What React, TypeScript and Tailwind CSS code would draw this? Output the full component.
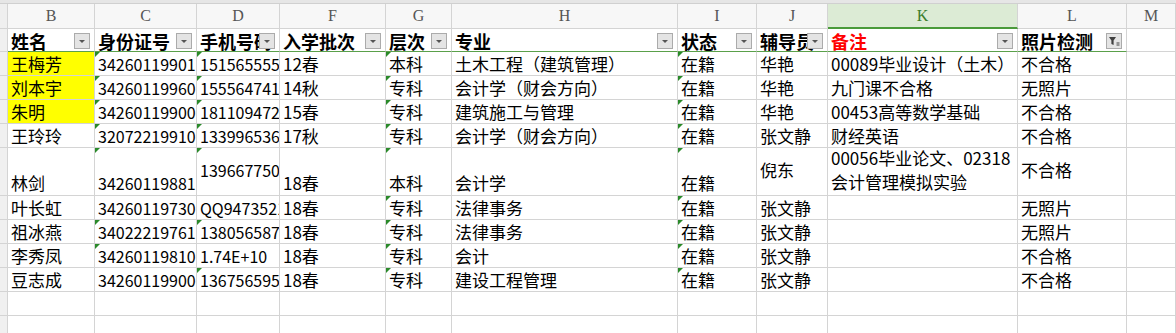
import React from 'react'

const COLS = ['B', 'C', 'D', 'F', 'G', 'H', 'I', 'J', 'K', 'L', 'M']

const HEADERS = ['姓名', '身份证号', '手机号码', '入学批次', '层次', '专业', '状态', '辅导员', '备注', '照片检测']

type Row = { cells: string[]; yellow?: boolean; tall?: boolean; marks: number[] }

// marks: column indexes (0 = B) that carry the green "number stored as text" corner
const ROWS: Row[] = [
  { cells: ['王梅芳', '34260119901', '151565555', '12春', '本科', '土木工程（建筑管理）', '在籍', '华艳', '00089毕业设计（土木）', '不合格'], yellow: true, marks: [1, 2, 4, 6] },
  { cells: ['刘本宇', '34260119960', '155564741', '14秋', '专科', '会计学（财会方向）', '在籍', '华艳', '九门课不合格', '无照片'], yellow: true, marks: [1, 2, 4, 6] },
  { cells: ['朱明', '34260119900', '181109472', '15春', '专科', '建筑施工与管理', '在籍', '华艳', '00453高等数学基础', '不合格'], yellow: true, marks: [1, 2, 4, 6] },
  { cells: ['王玲玲', '32072219910', '133996536', '17秋', '专科', '会计学（财会方向）', '在籍', '张文静', '财经英语', '不合格'], marks: [1, 2, 4, 6] },
  { cells: ['林剑', '34260119881', '139667750', '18春', '本科', '会计学', '在籍', '倪东', '', '不合格'], tall: true, marks: [1, 2, 4, 6] },
  { cells: ['叶长虹', '34260119730', 'QQ9473521', '18春', '专科', '法律事务', '在籍', '张文静', '', '无照片'], marks: [4, 6] },
  { cells: ['祖冰燕', '34022219761', '138056587', '18春', '专科', '法律事务', '在籍', '张文静', '', '无照片'], marks: [1, 2, 4, 6] },
  { cells: ['李秀凤', '34260119810', '1.74E+10', '18春', '专科', '会计', '在籍', '张文静', '', '不合格'], marks: [1, 4, 6] },
  { cells: ['豆志成', '34260119900', '136756595', '18春', '专科', '建设工程管理', '在籍', '张文静', '', '不合格'], marks: [2, 4, 6] },
]

const grid = 'border-r border-b border-[#d4d4d4]'

function Corner() {
  return (
    <span className="absolute left-0 top-0 h-0 w-0 border-t-[5px] border-r-[5px] border-t-[#2a8a2a] border-r-transparent" />
  )
}

function FilterButton({ active }: { active?: boolean }) {
  return (
    <span className="absolute right-[4px] bottom-[2px] flex h-[16px] w-[16px] items-center justify-center border border-[#ababab] bg-[#e4e4e4]">
      {active ? (
        <svg width="12" height="12" viewBox="0 0 12 12">
          <path d="M1 2h7L5.6 5.4V10L3.4 9V5.4z" fill="#404040" />
          <rect x="8.5" y="7.5" width="3" height="1" fill="#404040" />
          <rect x="8.5" y="9.5" width="3" height="1" fill="#404040" />
        </svg>
      ) : (
        <svg width="10" height="10" viewBox="0 0 10 10">
          <polygon points="2,4 8,4 5,7" fill="#555" />
        </svg>
      )}
    </span>
  )
}

function RowHead() {
  return <div className={`bg-[#f0f0f0] ${grid}`} />
}

export default function App() {
  return (
    <div
      className="h-[333px] w-[1176px] overflow-hidden bg-white text-black"
      style={{ fontFamily: '"Noto Sans CJK SC", "Liberation Sans", sans-serif' }}
    >
      {/* top strip */}
      <div className="h-[4px] border-b border-[#d0d0d0] bg-[#e6e6e6]" />

      <div className="grid grid-cols-[8px_87px_102px_83px_106px_66px_226px_79px_71px_190px_109px_1fr] grid-rows-[25px_23px_24px_24px_24px_24px_48px_24px_24px_24px_24px_24px_24px_24px]">
        {/* column letters */}
        <div className={`bg-[#efefef] ${grid}`} />
        {COLS.map((c) =>
          c === 'K' ? (
            <div
              key={c}
              className="flex items-center justify-center border-r border-b-2 border-r-[#d4d4d4] border-b-[#4a9a3a] bg-[#dcebd5] font-['Liberation_Serif'] text-[16px] text-[#3b7d2c]"
            >
              {c}
            </div>
          ) : (
            <div
              key={c}
              className={`flex items-center justify-center bg-[#f7f7f7] font-['Liberation_Serif'] text-[16px] text-[#555] ${grid}`}
            >
              {c}
            </div>
          ),
        )}

        {/* header row */}
        <div className={`bg-[#f0f0f0] ${grid}`} />
        {HEADERS.map((h, i) => (
          <div
            key={h}
            className={`relative flex items-center overflow-hidden whitespace-nowrap border-r border-b border-r-[#d4d4d4] border-b-[#5aa04a] pt-[2px] pl-[3px] text-[18px] leading-[20px] font-bold ${
              h === '备注' ? 'text-[#ff0000]' : ''
            }`}
          >
            {h}
            <FilterButton active={i === 9} />
          </div>
        ))}
        <div className={grid} />

        {/* data rows */}
        {ROWS.map((r, ri) => (
          <React.Fragment key={ri}>
            <RowHead />
            {r.cells.map((v, ci) => {
              let align = 'items-center'
              if (r.tall) align = ci === 2 || ci === 7 || ci === 9 ? 'items-center pb-[4px]' : 'items-end pb-[1px]'
              const size = ci === 1 || ci === 2 ? 'text-[16px]' : 'text-[17px]'
              return (
                <div
                  key={ci}
                  className={`relative flex overflow-hidden whitespace-nowrap pl-[3px] leading-[22px] ${size} ${align} ${
                    ci === 0 && r.yellow ? 'bg-[#ffff00]' : ''
                  } ${grid}`}
                >
                  {r.marks.includes(ci) && <Corner />}
                  {r.tall && ci === 8 ? (
                    <div className="flex flex-col leading-[24px]">
                      <span>00056毕业论文、02318</span>
                      <span>会计管理模拟实验</span>
                    </div>
                  ) : (
                    v
                  )}
                </div>
              )
            })}
            <div className={grid} />
          </React.Fragment>
        ))}

        {/* empty rows */}
        {[0, 1, 2].map((e) => (
          <React.Fragment key={`e${e}`}>
            <RowHead />
            {COLS.map((c) => (
              <div key={c} className={grid} />
            ))}
          </React.Fragment>
        ))}
      </div>
    </div>
  )
}
